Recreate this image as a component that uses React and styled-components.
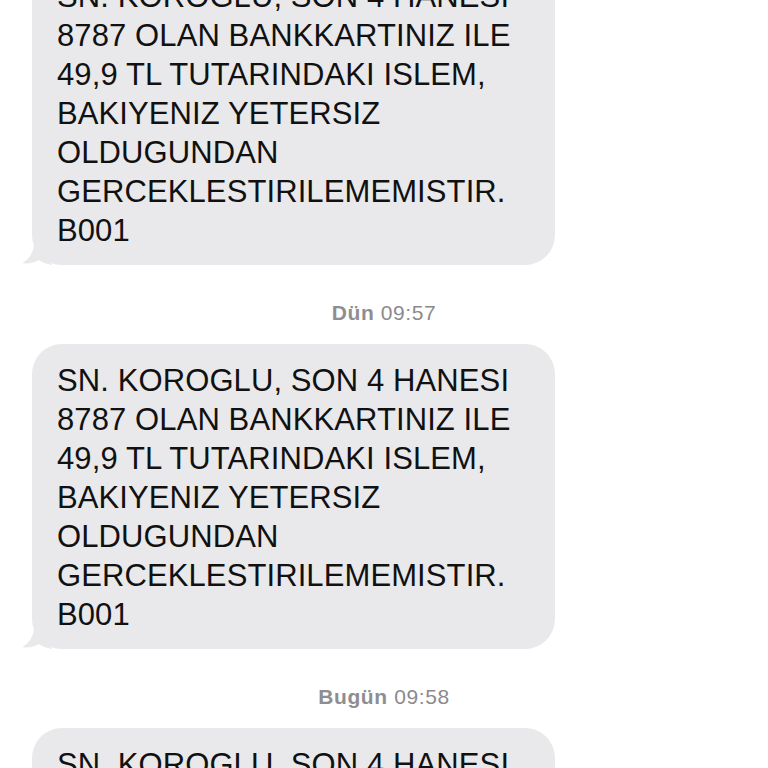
import React from "react";
import styled, { createGlobalStyle } from "styled-components";

const message =
  "SN. KOROGLU, SON 4 HANESI\n8787 OLAN BANKKARTINIZ ILE\n49,9 TL TUTARINDAKI ISLEM,\nBAKIYENIZ YETERSIZ\nOLDUGUNDAN\nGERCEKLESTIRILEMEMISTIR.\nB001";

const items = [
  { type: "msg", text: message },
  { type: "time", day: "Dün", time: "09:57" },
  { type: "msg", text: message },
  { type: "time", day: "Bugün", time: "09:58" },
  { type: "msg", text: message },
];

const GlobalStyle = createGlobalStyle`
  html, body {
    margin: 0;
    padding: 0;
    background: #ffffff;
    overflow: hidden;
  }
  body {
    font-family: "Liberation Sans", Arial, sans-serif;
  }
`;

const Thread = styled.div`
  display: flex;
  flex-direction: column;
  margin-top: -40px;
  padding: 0 32px;
  height: 808px;
  overflow: hidden;
`;

const Row = styled.div`
  display: flex;
  justify-content: flex-start;
`;

const Bubble = styled.div`
  position: relative;
  width: 523px;
  box-sizing: border-box;
  padding: 17px 20px 15px 25px;
  background: #e9e9eb;
  border-radius: 30px;
  color: #111111;
  font-size: 31px;
  line-height: 39px;
  letter-spacing: 0.1px;
  white-space: pre-line;
`;

const Tail = styled.svg`
  position: absolute;
  left: -10px;
  bottom: 0;
  width: 30px;
  height: 22px;
`;

const Stamp = styled.div`
  margin: 36px 0 19px;
  text-align: center;
  color: #8a8a8e;
  font-size: 21px;
  line-height: 24px;
  letter-spacing: 0.6px;
  b {
    font-weight: 700;
    color: #8e8e92;
  }
`;

const App = () => {
  return (
    <>
      <GlobalStyle />
      <Thread>
        {items.map((item, i) =>
          item.type === "msg" ? (
            <Row key={i}>
              <Bubble>
                <Tail viewBox="0 0 30 22">
                  <path
                    d="M12 0 C12 8 8 16 0 20 C6 21 12 20 17 17 C20 19 24 21 30 22 L30 0 Z"
                    fill="#e9e9eb"
                  />
                </Tail>
                {item.text}
              </Bubble>
            </Row>
          ) : (
            <Stamp key={i}>
              <b>{item.day}</b> {item.time}
            </Stamp>
          )
        )}
      </Thread>
    </>
  );
};

export default App;
